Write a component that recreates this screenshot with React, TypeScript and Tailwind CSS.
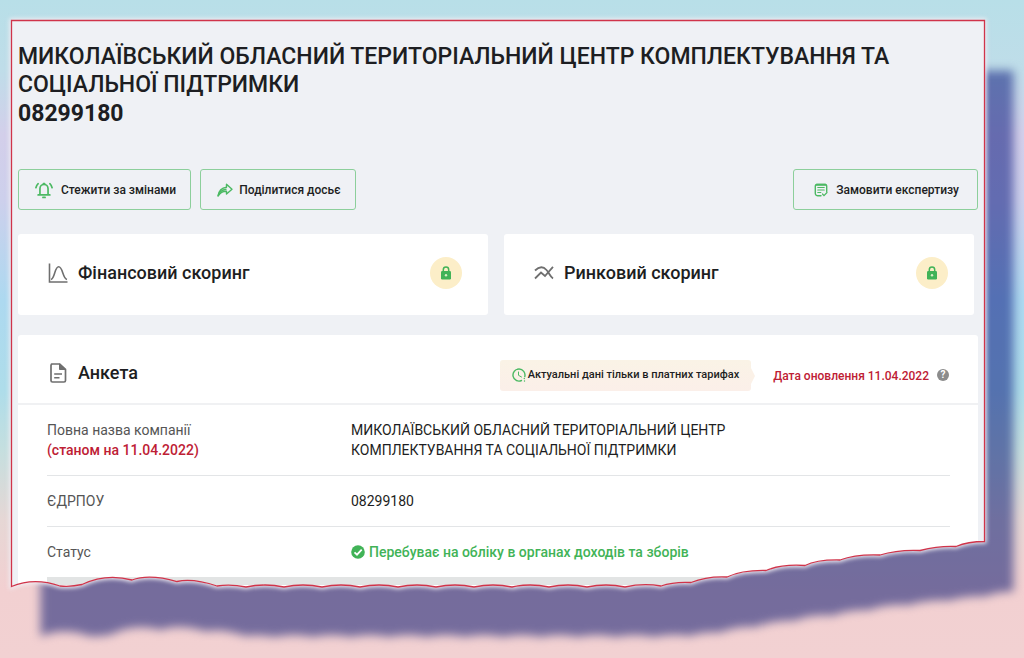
import React from 'react';

const TORN =
  'M0.5 0.5 H973.5 V521.5 Q957 521.5 945 526.5 Q929 525.5 909 530.5 Q887 529.5 869 535 Q845 534 829 540 Q806 539.5 794 545.5 Q770 544 755 550.5 Q731 550 716 557 Q696 556 680 562.5 Q663 561.5 650 566 Q632 563 614 567 Q595 563 576 567 Q557 563 538 567 Q519 563 501 567 Q482 563 463 567 Q444 563 425 567 Q406 563 387 567 Q368 563 349 567 Q330 563 311 567 Q292 563 273 567 Q254 563 235 567 Q220 564 206 566 Q182 558 166 561.5 Q138 553.5 121 560 Q95 553 71 564.5 Q60 567 49 566 Q23 557 0.5 566.5 Z';

const BellIcon = () => (
  <svg className="h-[18px] w-[18px] shrink-0" viewBox="0 0 20 20" fill="none" stroke="#4cb963" strokeWidth="1.9" strokeLinecap="round" strokeLinejoin="round">
    <path d="M3.5 15.5h13M5.5 15V8.5a4.5 4.7 0 0 1 9 0V15M9.3 3h1.4M8.8 18.3h2.4" />
    <path d="M3.5 3Q1.8 4.5 1 7.5M16.5 3Q18.2 4.5 19 7.5" />
  </svg>
);

const ShareIcon = () => (
  <svg className="h-4 w-4 shrink-0" viewBox="0 0 16 16" fill="none" stroke="#4cb963" strokeWidth="1.4" strokeLinejoin="round">
    <path d="M9.5 2.2 15 7.2 9.5 12V9.3Q4.5 9 1 14 2.2 6 9.5 5.2Z" />
    <path d="M1 14Q2.5 8 9.5 7.2" />
  </svg>
);

const ReviewIcon = () => (
  <svg className="h-3.5 w-3.5 shrink-0" viewBox="0 0 14 14" fill="none" stroke="#4cb963" strokeWidth="1.4" strokeLinecap="round">
    <path d="M7 12.8H4A2.5 2.5 0 0 1 1.3 10.5V3A1.5 1.5 0 0 1 2.8 1.5H11.2A1.5 1.5 0 0 1 12.7 3V8.5" strokeLinejoin="round" />
    <path d="M3.8 4.5h6.4M3.8 7h6.4M3.8 9.5h3M8.5 11l1.5 1.7 3-3.2" strokeWidth="1.2" />
    <path d="M2.5 1.8h9" strokeWidth="2" />
  </svg>
);

const CurveIcon = () => (
  <svg className="h-5 w-5 shrink-0" viewBox="0 0 20 20" fill="none" stroke="#6f6f6f" strokeWidth="1.6">
    <path d="M1.5 0.5V19H19.5" />
    <path d="M3 16.5C7 15.5 6.5 3.8 10.7 3.8S14.5 15.5 19 16.5" />
  </svg>
);

const TrendIcon = () => (
  <svg className="h-5 w-5 shrink-0" viewBox="0 0 20 20" fill="none" stroke="#6f6f6f" strokeWidth="1.8">
    <path d="M1 7.5C5.5 3 9.5 3.5 12.5 7S16 13.5 19 15.5" />
    <path d="M1 15.5 7 9.5 11 13 19 3.8" />
  </svg>
);

const FileIcon = () => (
  <svg className="h-5 w-5 shrink-0" viewBox="0 0 20 20" fill="none" stroke="#6f6f6f" strokeWidth="1.7" strokeLinejoin="round">
    <path d="M3.5 1H11.5L17.5 6.5V17.5A1.5 1.5 0 0 1 16 19H4.5A1.5 1.5 0 0 1 3 17.5V2.5A1.5 1.5 0 0 1 4.5 1Z" />
    <path d="M11.5 1V6.5H17.5Z" fill="#6f6f6f" strokeWidth="1" />
    <path d="M6.2 11H14M6.2 14.8H11.5" strokeWidth="1.5" />
  </svg>
);

const ClockIcon = () => (
  <svg className="h-3.5 w-3.5 shrink-0" viewBox="0 0 14 14" fill="none" stroke="#4cb963" strokeWidth="1.4" strokeLinecap="round">
    <path d="M9.5 12.5A6 6 0 1 1 12.8 8.5" />
    <path d="M6.5 4V7.3L9.5 9" strokeWidth="1" />
    <path d="M12.3 10.5v0M12.5 13v0" />
  </svg>
);

const CheckIcon = () => (
  <svg className="h-3.5 w-3.5 shrink-0" viewBox="0 0 14 14" fill="none">
    <circle cx="7" cy="7" r="6.8" fill="#41b357" />
    <path d="M3.5 7.3 6 9.7 10.7 4.7" stroke="#fff" strokeWidth="1.8" />
  </svg>
);

const Lock = () => (
  <div className="flex h-8 w-8 shrink-0 items-center justify-center rounded-full bg-[#fceec8]">
    <svg className="h-3.5 w-3" viewBox="0 0 12 14" fill="none">
      <path d="M3.3 6V3.8a2.7 2.7 0 0 1 5.4 0V6" stroke="#41b357" strokeWidth="1.5" />
      <rect x="1" y="5" width="10" height="8.5" rx="1.2" fill="#41b357" />
      <circle cx="6" cy="9.2" r="1.2" fill="#d8efc4" />
    </svg>
  </div>
);

const App = () => {
  return (
    <div
      className="flow-root min-h-screen overflow-hidden bg-[linear-gradient(180deg,#b8dfe8_0px,#bfdde9_70px,#d3cfea_135px,#cdd0ec_200px,#add9f0_300px,#aeddea_390px,#c5dfdf_450px,#e6d7d5_520px,#f2d0d1_590px,#f2d1d2_658px)] pb-[70px] text-[#1d1e22]"
      style={{ fontFamily: 'Roboto, "Noto Sans", sans-serif' }}
    >
      <main className="relative mt-5 mr-[39px] ml-[11px]">
        {/* shadow and soft halo under the sheet */}
        <svg
          className="absolute top-[50px] left-[29px] h-full w-full overflow-visible mix-blend-multiply blur-[5px]"
          viewBox="0 0 974 568"
          preserveAspectRatio="none"
          aria-hidden="true"
        >
          <path d={TORN} fill="#7b84bf" />
        </svg>
        <svg
          className="absolute inset-0 h-full w-full overflow-visible blur-[2px]"
          viewBox="0 0 974 568"
          preserveAspectRatio="none"
          aria-hidden="true"
        >
          <path d={TORN} fill="#f2eef4" stroke="#f2eef4" strokeWidth="4" />
          <clipPath id="torn" clipPathUnits="objectBoundingBox">
            <path d={TORN} transform="scale(0.00102669 0.00176056)" />
          </clipPath>
        </svg>

        <div className="relative bg-[#eff1f5] pt-[23px] pr-[7px] pl-[7px] [clip-path:url(#torn)]">
          <h1 className="pr-16 text-[23px] leading-7 font-medium">
            МИКОЛАЇВСЬКИЙ ОБЛАСНИЙ ТЕРИТОРІАЛЬНИЙ ЦЕНТР КОМПЛЕКТУВАННЯ ТА
            СОЦІАЛЬНОЇ ПІДТРИМКИ
          </h1>
          <p className="text-[23px] leading-[30px] font-bold">08299180</p>

          <div className="mt-10 flex gap-[9px] text-xs font-medium">
            <button className="flex h-[41px] items-center gap-2 rounded-[3px] border border-[#8ccf9b] pr-3.5 pl-4">
              <BellIcon />
              Стежити за змінами
            </button>
            <button className="flex h-[41px] items-center gap-1.5 rounded-[3px] border border-[#8ccf9b] pr-3.5 pl-4">
              <ShareIcon />
              Поділитися досьє
            </button>
            <button className="ml-auto flex h-[41px] items-center gap-2 rounded-[3px] border border-[#8ccf9b] pr-[18px] pl-5">
              <ReviewIcon />
              Замовити експертизу
            </button>
          </div>

          <div className="mt-6 mr-1 grid grid-cols-2 gap-4">
            <section className="flex h-[81px] items-center gap-2.5 rounded-[3px] bg-white pr-[26px] pb-1 pl-[30px]">
              <CurveIcon />
              <h2 className="flex-1 text-lg font-medium">Фінансовий скоринг</h2>
              <Lock />
            </section>
            <section className="flex h-[81px] items-center gap-2.5 rounded-[3px] bg-white pr-[26px] pb-1 pl-[30px]">
              <TrendIcon />
              <h2 className="flex-1 text-lg font-medium">Ринковий скоринг</h2>
              <Lock />
            </section>
          </div>

          <section className="mt-5 rounded-t-[3px] bg-white pb-[3px]">
            <header className="flex h-[70px] items-center border-b-2 border-[#f0f1f3] pt-2 pr-[29px] pl-[30px]">
              <FileIcon />
              <h2 className="ml-2.5 flex-1 text-lg font-medium">Анкета</h2>
              <div className="flex items-center pt-1 font-medium">
                <div className="relative flex h-[31px] items-center gap-0.5 rounded-[3px] bg-linear-to-b from-[#faf3e6] to-[#fbefe9] px-3 text-[11px]">
                  <ClockIcon />
                  Актуальні дані тільки в платних тарифах
                  <svg className="absolute top-2 -right-1 h-4 w-1" viewBox="0 0 4 16" aria-hidden="true">
                    <path d="M0 0 4 8 0 16Z" fill="#fbf1e7" />
                  </svg>
                </div>
                <p className="ml-[22px] pt-0.5 text-xs text-[#be2034]">Дата оновлення 11.04.2022</p>
                <button className="ml-2 h-3 w-3 rounded-full bg-[#8c8c8c] text-center text-[10px] leading-3 font-bold text-white">
                  ?
                </button>
              </div>
            </header>
            <dl className="mr-7 ml-[29px] text-sm leading-5">
              <div className="flex border-b border-[#e3e5e7] py-[15px]">
                <dt className="w-[304px] shrink-0 text-[#555]">
                  Повна назва компанії
                  <span className="block font-medium text-[#be2034]">(станом на 11.04.2022)</span>
                </dt>
                <dd className="max-w-[400px]">
                  МИКОЛАЇВСЬКИЙ ОБЛАСНИЙ ТЕРИТОРІАЛЬНИЙ ЦЕНТР КОМПЛЕКТУВАННЯ ТА
                  СОЦІАЛЬНОЇ ПІДТРИМКИ
                </dd>
              </div>
              <div className="flex border-b border-[#e3e5e7] py-[15px]">
                <dt className="w-[304px] shrink-0 text-[#555]">ЄДРПОУ</dt>
                <dd>08299180</dd>
              </div>
              <div className="flex border-b-8 border-[#e2e4e4] py-[15px]">
                <dt className="w-[304px] shrink-0 text-[#555]">Статус</dt>
                <dd className="flex items-center gap-1 font-medium text-[#41b357]">
                  <CheckIcon />
                  Перебуває на обліку в органах доходів та зборів
                </dd>
              </div>
            </dl>
          </section>
        </div>

        <svg
          className="pointer-events-none absolute inset-0 h-full w-full overflow-visible"
          viewBox="0 0 974 568"
          preserveAspectRatio="none"
          aria-hidden="true"
        >
          <path d={TORN} fill="none" stroke="#d0344a" strokeWidth="1.3" />
        </svg>
      </main>
    </div>
  );
};

export default App;
